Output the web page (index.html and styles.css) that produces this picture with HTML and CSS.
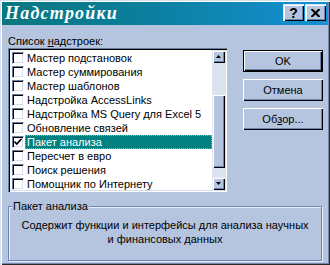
FILE: index.html
```html
<!DOCTYPE html>
<html lang="ru">
<head>
<meta charset="utf-8">
<title>Надстройки</title>
<link rel="stylesheet" href="styles.css">
</head>
<body>
<div class="window">
  <div class="titlebar">
    <span class="title">Надстройки</span>
    <div class="caps">
      <div class="cap"><span class="q">?</span></div>
      <div class="cap">
        <svg width="9" height="8" viewBox="0 0 9 8"><path d="M0.5 0 L8.5 8 M8.5 0 L0.5 8" stroke="#000" stroke-width="2"/></svg>
      </div>
    </div>
  </div>
  <div class="content">
    <div class="top">
      <div class="left">
        <div class="label">Список <u>н</u>адстроек:</div>
        <div class="listbox">
          <div class="items">
            <div class="row"><span class="cb"></span><span class="txt">Мастер подстановок</span></div>
            <div class="row"><span class="cb"></span><span class="txt">Мастер суммирования</span></div>
            <div class="row"><span class="cb"></span><span class="txt">Мастер шаблонов</span></div>
            <div class="row"><span class="cb"></span><span class="txt">Надстройка AccessLinks</span></div>
            <div class="row"><span class="cb"></span><span class="txt">Надстройка MS Query для Excel 5</span></div>
            <div class="row"><span class="cb"></span><span class="txt">Обновление связей</span></div>
            <div class="row sel"><span class="cb"><svg width="8" height="8" viewBox="0 0 8 8"><path d="M0.5 3.5 L2.8 6 L7.5 0.8" stroke="#000" stroke-width="1.6" fill="none"/></svg></span><span class="txt">Пакет анализа</span></div>
            <div class="row"><span class="cb"></span><span class="txt">Пересчет в евро</span></div>
            <div class="row"><span class="cb"></span><span class="txt">Поиск решения</span></div>
            <div class="row"><span class="cb"></span><span class="txt">Помощник по Интернету</span></div>
          </div>
          <div class="scrollbar">
            <div class="sbtn"><svg width="5" height="3" viewBox="0 0 5 3"><path d="M2.5 0 L5 3 L0 3 Z" fill="#000"/></svg></div>
            <div class="track t1"></div>
            <div class="thumb"></div>
            <div class="track t2"></div>
            <div class="sbtn"><svg width="5" height="3" viewBox="0 0 5 3"><path d="M0 0 L5 0 L2.5 3 Z" fill="#000"/></svg></div>
          </div>
        </div>
      </div>
      <div class="buttons">
        <div class="btn default">OK</div>
        <div class="btn">Отмена</div>
        <div class="btn">Об<u>з</u>ор...</div>
      </div>
    </div>
    <div class="group">
      <span class="legend">Пакет анализа</span>
      <p class="desc">Содержит функции и интерфейсы для анализа научных<br>и финансовых данных</p>
    </div>
  </div>
</div>
</body>
</html>
```
FILE: styles.css
```css
* { box-sizing: border-box; }
html, body { margin: 0; padding: 0; }
body {
  width: 330px;
  height: 265px;
  overflow: hidden;
  font-family: "Liberation Sans", Arial, sans-serif;
  font-size: 11px;
  line-height: 14px;
  color: #000;
  background: #b5c5df;
}
.window {
  width: 330px;
  height: 265px;
  padding: 2px;
  background: #b5c5df;
  box-shadow: inset 1px 1px 0 #d6dfee, inset 2px 2px 0 #ffffff, inset -1px -1px 0 #2a2a2a, inset -2px -2px 0 #7189b3;
}
.titlebar {
  height: 23px;
  display: flex;
  align-items: flex-start;
  justify-content: space-between;
  padding: 0 2px 0 3px;
  background: linear-gradient(90deg, #08777e 0%, #0b7f9e 45%, #1690d6 100%);
}
.title {
  font-family: "Liberation Serif", "Times New Roman", serif;
  font-weight: bold;
  font-style: italic;
  font-size: 18px;
  line-height: 23px;
  letter-spacing: 1.2px;
  color: #fff;
}
.caps {
  display: flex;
  gap: 1px;
  margin-top: 2px;
}
.cap {
  width: 21px;
  height: 17px;
  background: #b5c5df;
  display: flex;
  align-items: center;
  justify-content: center;
  box-shadow: inset 1px 1px 0 #dfe6f2, inset 2px 2px 0 #fff, inset -1px -1px 0 #000, inset -2px -2px 0 #6e84ad;
}
.q {
  font-family: "Liberation Sans", Arial, sans-serif;
  font-weight: bold;
  font-size: 14px;
  line-height: 14px;
}
.content {
  padding: 9px 0 0 6px;
}
.top {
  display: flex;
  gap: 16px;
}
.left {
  width: 219px;
}
.label { height: 14px; }
u { text-decoration: underline; text-underline-offset: 1px; }
.listbox {
  height: 144px;
  display: flex;
  padding: 2px;
  background: #fff;
  box-shadow: inset 1px 1px 0 #6d7f9f, inset 2px 2px 0 #000, inset -1px -1px 0 #fff, inset -2px -2px 0 #d7dfec;
}
.items {
  width: 202px;
  height: 140px;
  overflow: hidden;
  padding-top: 1px;
}
.row {
  height: 14px;
  display: flex;
  align-items: center;
}
.cb {
  width: 12px;
  height: 12px;
  margin-left: 2px;
  margin-right: 1px;
  flex: none;
  background: #fff;
  border: 1px solid;
  border-color: #6d7f9f #fff #fff #6d7f9f;
  box-shadow: inset 1px 1px 0 #000, inset -1px -1px 0 #d7dfec;
  display: flex;
  align-items: center;
  justify-content: center;
}
.txt {
  flex: 1;
  height: 14px;
  padding-left: 2px;
  white-space: nowrap;
}
.sel .txt {
  background: #008080;
  color: #fff;
  outline: 1px dotted #f09070;
  outline-offset: -1px;
}
.scrollbar {
  width: 13px;
  height: 140px;
  display: flex;
  flex-direction: column;
  background: #dbe3ef;
}
.sbtn, .thumb {
  background: #b5c5df;
  box-shadow: inset 1px 1px 0 #dfe6f2, inset 2px 2px 0 #fff, inset -1px -1px 0 #000, inset -2px -2px 0 #6e84ad;
}
.sbtn {
  height: 13px;
  display: flex;
  align-items: center;
  justify-content: center;
}
.t1 { height: 31px; }
.thumb { height: 74px; }
.t2 { flex: 1; }
.buttons {
  display: flex;
  flex-direction: column;
  gap: 7px;
  padding-top: 16px;
}
.btn {
  width: 80px;
  height: 22px;
  display: flex;
  align-items: center;
  justify-content: center;
  background: #b5c5df;
  box-shadow: inset 1px 1px 0 #fff, inset -1px -1px 0 #000, inset -2px -2px 0 #6e84ad;
}
.btn.default {
  border: 1px solid #000;
  box-shadow: inset 1px 1px 0 #fff, inset -1px -1px 0 #000, inset -2px -2px 0 #6e84ad;
}
.group {
  width: 314px;
  height: 55px;
  margin-top: 14px;
  border: 1px solid #6f86b5;
  box-shadow: inset 1px 1px 0 #e9eef8, 1px 1px 0 #e9eef8;
}
.legend {
  display: block;
  width: fit-content;
  height: 14px;
  margin: -8px 0 0 3px;
  padding: 0 1px;
  background: #b5c5df;
}
.desc {
  margin: 5px 0 0 0;
  text-align: center;
}
```
